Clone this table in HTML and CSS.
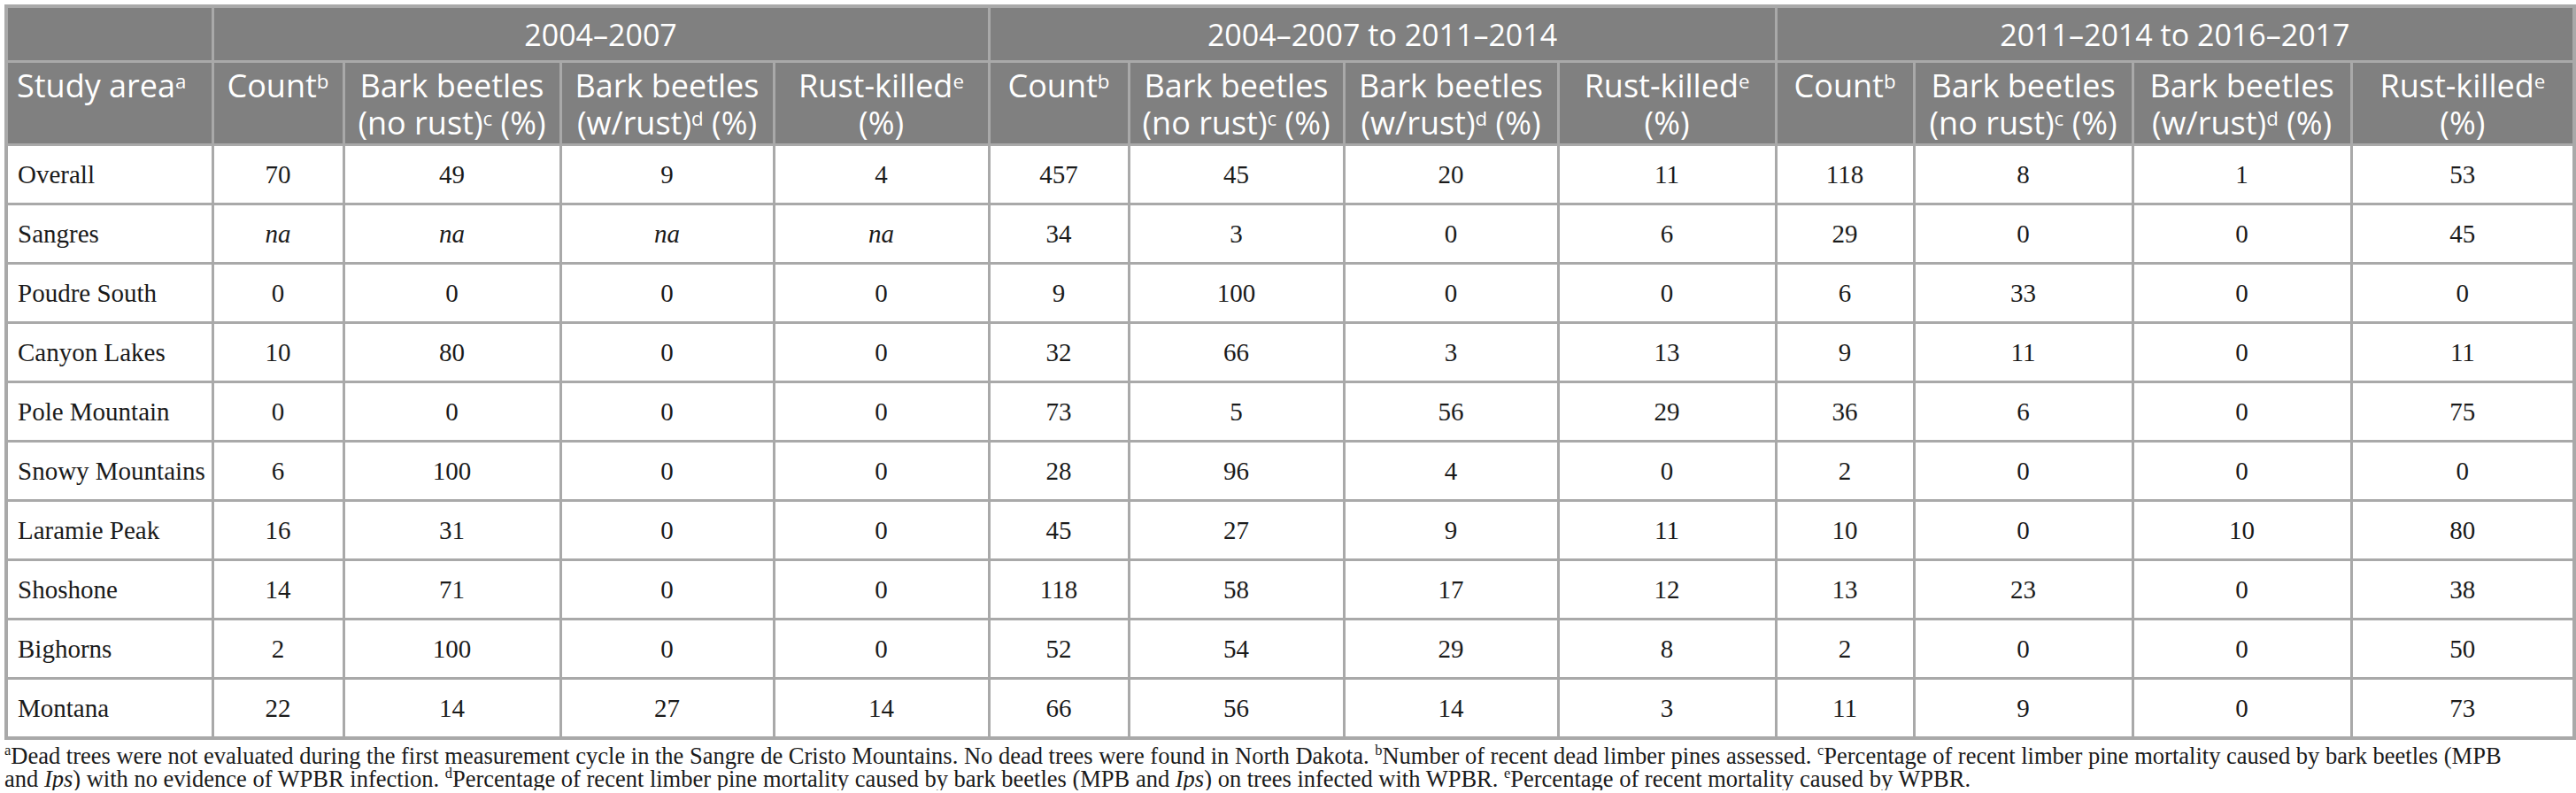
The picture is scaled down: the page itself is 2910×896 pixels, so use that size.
FILE: index.html
```html
<!DOCTYPE html>
<html lang="en">
<head>
    <meta charset="UTF-8">
    <title>Limber pine mortality by cause</title>
    <link rel="stylesheet" href="styles.css">
</head>
<body>
    <div class="wrap">
        <table class="mort">
            <colgroup>
                <col style="width:233px">
                <col style="width:148px">
                <col style="width:245px">
                <col style="width:241px">
                <col style="width:243px">
                <col style="width:158px">
                <col style="width:243px">
                <col style="width:242px">
                <col style="width:246px">
                <col style="width:156px">
                <col style="width:247px">
                <col style="width:247px">
                <col style="width:252px">
            </colgroup>
            <thead>
                <tr class="period">
                    <th></th>
                    <th colspan="4">2004–2007</th>
                    <th colspan="4">2004–2007 to 2011–2014</th>
                    <th colspan="4">2011–2014 to 2016–2017</th>
                </tr>
                <tr class="labels">
                    <th class="area">Study area<sup>a</sup></th>
                    <th>Count<sup>b</sup></th>
                    <th>Bark beetles<br>(no rust)<sup>c</sup> (%)</th>
                    <th>Bark beetles<br>(w/rust)<sup>d</sup> (%)</th>
                    <th>Rust-killed<sup>e</sup><br>(%)</th>
                    <th>Count<sup>b</sup></th>
                    <th>Bark beetles<br>(no rust)<sup>c</sup> (%)</th>
                    <th>Bark beetles<br>(w/rust)<sup>d</sup> (%)</th>
                    <th>Rust-killed<sup>e</sup><br>(%)</th>
                    <th>Count<sup>b</sup></th>
                    <th>Bark beetles<br>(no rust)<sup>c</sup> (%)</th>
                    <th>Bark beetles<br>(w/rust)<sup>d</sup> (%)</th>
                    <th>Rust-killed<sup>e</sup><br>(%)</th>
                </tr>
            </thead>
            <tbody>
                <tr><td>Overall</td><td>70</td><td>49</td><td>9</td><td>4</td><td>457</td><td>45</td><td>20</td><td>11</td><td>118</td><td>8</td><td>1</td><td>53</td></tr>
                <tr><td>Sangres</td><td><i>na</i></td><td><i>na</i></td><td><i>na</i></td><td><i>na</i></td><td>34</td><td>3</td><td>0</td><td>6</td><td>29</td><td>0</td><td>0</td><td>45</td></tr>
                <tr><td>Poudre South</td><td>0</td><td>0</td><td>0</td><td>0</td><td>9</td><td>100</td><td>0</td><td>0</td><td>6</td><td>33</td><td>0</td><td>0</td></tr>
                <tr><td>Canyon Lakes</td><td>10</td><td>80</td><td>0</td><td>0</td><td>32</td><td>66</td><td>3</td><td>13</td><td>9</td><td>11</td><td>0</td><td>11</td></tr>
                <tr><td>Pole Mountain</td><td>0</td><td>0</td><td>0</td><td>0</td><td>73</td><td>5</td><td>56</td><td>29</td><td>36</td><td>6</td><td>0</td><td>75</td></tr>
                <tr><td>Snowy Mountains</td><td>6</td><td>100</td><td>0</td><td>0</td><td>28</td><td>96</td><td>4</td><td>0</td><td>2</td><td>0</td><td>0</td><td>0</td></tr>
                <tr><td>Laramie Peak</td><td>16</td><td>31</td><td>0</td><td>0</td><td>45</td><td>27</td><td>9</td><td>11</td><td>10</td><td>0</td><td>10</td><td>80</td></tr>
                <tr><td>Shoshone</td><td>14</td><td>71</td><td>0</td><td>0</td><td>118</td><td>58</td><td>17</td><td>12</td><td>13</td><td>23</td><td>0</td><td>38</td></tr>
                <tr><td>Bighorns</td><td>2</td><td>100</td><td>0</td><td>0</td><td>52</td><td>54</td><td>29</td><td>8</td><td>2</td><td>0</td><td>0</td><td>50</td></tr>
                <tr><td>Montana</td><td>22</td><td>14</td><td>27</td><td>14</td><td>66</td><td>56</td><td>14</td><td>3</td><td>11</td><td>9</td><td>0</td><td>73</td></tr>
            </tbody>
        </table>

        <p class="notes"><sup>a</sup>Dead trees were not evaluated during the first measurement cycle in the Sangre de Cristo Mountains. No dead trees were found in North Dakota. <sup>b</sup>Number of recent dead limber pines assessed. <sup>c</sup>Percentage of recent limber pine mortality caused by bark beetles (MPB<br>and <i>Ips</i>) with no evidence of WPBR infection. <sup>d</sup>Percentage of recent limber pine mortality caused by bark beetles (MPB and <i>Ips</i>) on trees infected with WPBR. <sup>e</sup>Percentage of recent mortality caused by WPBR.</p>
    </div>
</body>
</html>
```

FILE: styles.css
```css
body {
    margin: 0;
    background: #fff;
    font-family: "Liberation Serif", "Times New Roman", serif;
    color: #1a1a1a;
}
.wrap {
    padding: 5px 5px 0 5px;
}
.mort {
    table-layout: fixed;
    border-collapse: collapse;
    width: 2901px;
    border: 4px solid #a9a9a9;
}
.mort th,
.mort td {
    border: 3px solid #a9a9a9;
}
.mort th {
    background-color: #808080;
    color: #fff;
    font-family: "Open Sans", "Noto Sans", sans-serif;
    font-weight: normal;
    text-align: center;
    padding: 0 4px;
}
.mort sup {
    font-size: 62%;
    line-height: 0;
    vertical-align: 0.45em;
}
.period th {
    height: 59px;
    font-size: 34px;
    line-height: 40px;
    vertical-align: middle;
}
.labels th {
    height: 86px;
    font-size: 36px;
    line-height: 42px;
    vertical-align: top;
    padding-top: 5px;
    white-space: nowrap;
}
.labels th.area {
    text-align: left;
    padding-left: 10px;
}
.mort td {
    height: 64px;
    padding: 0 8px;
    font-size: 29px;
    text-align: center;
    vertical-align: middle;
    white-space: nowrap;
}
.mort td:first-child {
    text-align: left;
    padding-left: 11px;
}
.notes {
    margin: 5px 0 0 0;
    font-size: 26.5px;
    line-height: 26px;
    white-space: nowrap;
    color: #1a1a1a;
}
.notes sup {
    font-size: 62%;
    line-height: 0;
}
```
